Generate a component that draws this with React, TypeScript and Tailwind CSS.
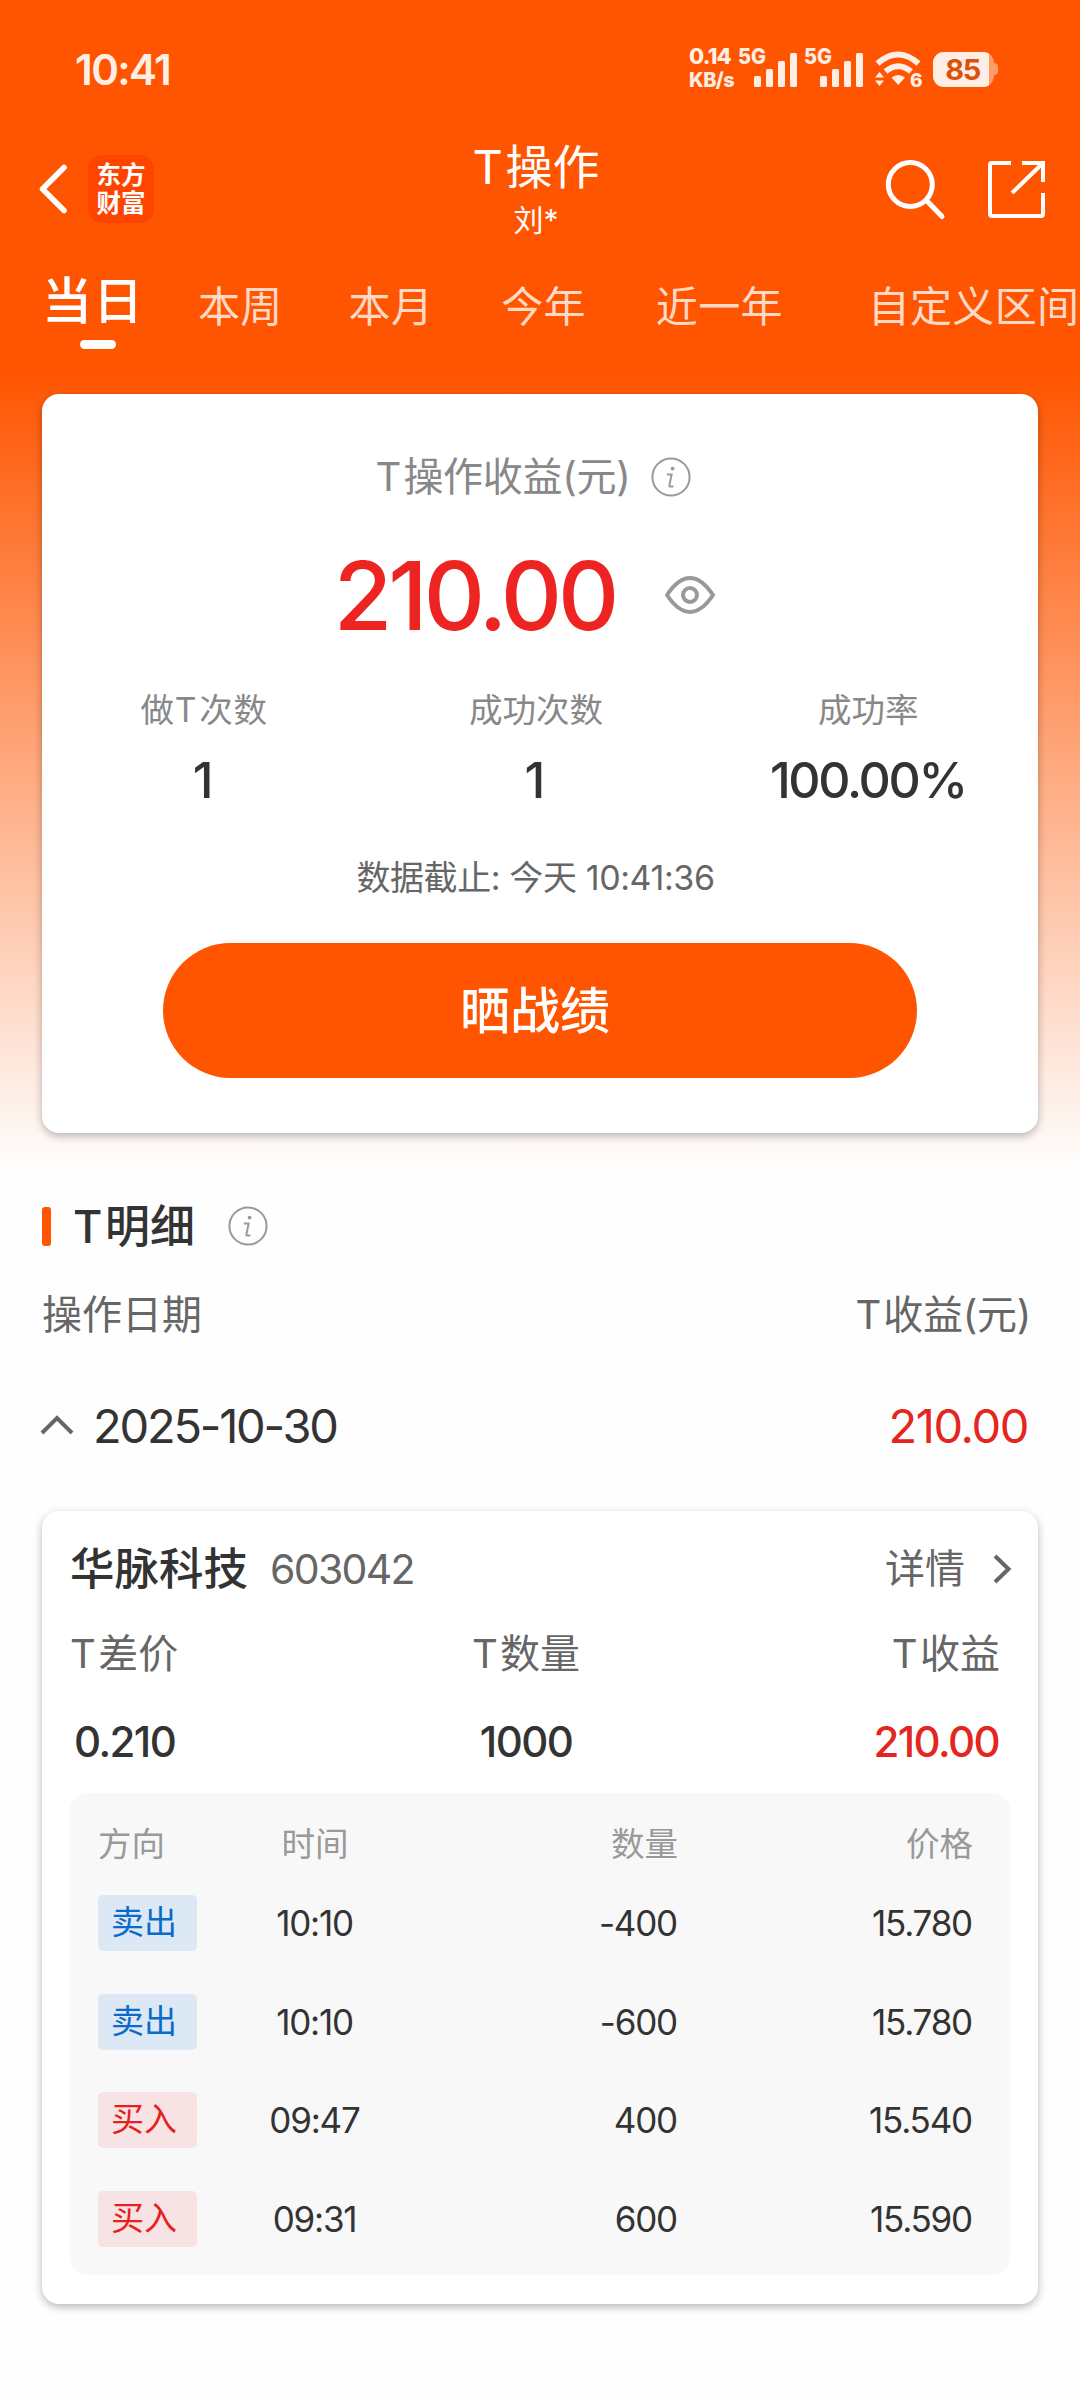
import React from 'react';
import clsx from 'clsx';

interface Trade {
  side: 'buy' | 'sell';
  time: string;
  amount: string;
  price: string;
}

const TABS = [
  { label: '本周', gap: 'ml-[56px]' },
  { label: '本月', gap: 'ml-[66px]' },
  { label: '今年', gap: 'ml-[68px]' },
  { label: '近一年', gap: 'ml-[70px]' },
  { label: '自定义区间', gap: 'ml-[85px]' },
];

const TRADES: Trade[] = [
  { side: 'sell', time: '10:10', amount: '-400', price: '15.780' },
  { side: 'sell', time: '10:10', amount: '-600', price: '15.780' },
  { side: 'buy', time: '09:47', amount: '400', price: '15.540' },
  { side: 'buy', time: '09:31', amount: '600', price: '15.590' },
];

// "T" followed by the thin gap that separates latin from chinese text
const T = () => <span className="mr-[0.06em]">T</span>;

const InfoIcon = () => (
  <svg width="40" height="40" viewBox="0 0 40 40" fill="none" stroke="#999" className="shrink-0">
    <circle cx="20" cy="20" r="18.6" strokeWidth="2" />
    <path d="M15.8 17.6H20.6L18.4 28.2Q18 29.6 19.6 29.6H22.4" strokeWidth="2" />
    <circle cx="21.6" cy="11.6" r="1.9" fill="#999" stroke="none" />
  </svg>
);

const Signal = () => (
  <svg width="60" height="42" viewBox="0 -2 60 42" fill="#ffeee6" className="shrink-0 overflow-visible">
    <text x="-1" y="14" fontSize="22" fontWeight="800" textLength="28" lengthAdjust="spacingAndGlyphs">5G</text>
    <rect x="15" y="26" width="7" height="11" rx="1.5" />
    <rect x="27" y="19" width="7" height="18" rx="1.5" />
    <rect x="39" y="11" width="7" height="26" rx="1.5" />
    <rect x="51" y="3" width="7" height="34" rx="1.5" />
  </svg>
);

const Wifi = () => (
  <svg width="50" height="44" viewBox="0 -2 50 44" fill="#ffeee6" className="shrink-0 overflow-visible">
    <path d="M1.5 14.5Q22 -3.5 42.5 14.5" fill="none" stroke="#ffeee6" strokeWidth="6" />
    <path d="M9.5 22.5Q22.3 12 35 22.5" fill="none" stroke="#ffeee6" strokeWidth="6" />
    <path d="M15.5 28.5Q22.3 23.5 29 28.5L22.3 36Z" />
    <path d="M-1 28.500L3.500 23L8 28.500Z M-1 31.500L8 31.500L3.500 37Z" />
    <text x="34" y="37.5" fontSize="19" fontWeight="800">6</text>
  </svg>
);

const StatusBar = () => (
  <div className="h-[138px] flex items-center pl-[75px] pr-[82px] text-[#ffeee6]">
    <span className="pt-[2px] text-[42px] leading-none font-semibold tracking-[-1.6px]">10:41</span>
    <div className="ml-auto flex items-center">
      <div className="w-[50px] pb-[2px] font-extrabold leading-[24px] whitespace-nowrap">
        <div className="text-[22px] tracking-[-0.8px]">0.14</div>
        <div className="text-[20px] tracking-[-0.6px]">KB/s</div>
      </div>
      <div className="w-[66px]"><Signal /></div>
      <div className="w-[71px]"><Signal /></div>
      <div className="w-[57px]"><Wifi /></div>
      <div className="w-[65px] flex items-center">
        <div className="w-[61px] h-[35px] rounded-[11px] bg-[#ff9a69] overflow-hidden">
          <div className="w-[56px] h-full bg-[#ffeee6] text-[#d9530b] text-[29px] leading-[35px] font-bold text-center pl-[3px] tracking-[-1.5px]">85</div>
        </div>
        <div className="w-[4px] h-[12px] rounded-r-[4px] bg-[#ff9a69]" />
      </div>
    </div>
  </div>
);

const Header = () => (
  <div className="h-[106px] flex text-white">
    <div className="w-[340px] h-[102px] flex items-center pl-[38px]">
      <svg width="32" height="52" viewBox="0 0 32 52" fill="none" stroke="#fff" strokeWidth="5.5" strokeLinecap="round" strokeLinejoin="round">
        <path d="M26 4.500L4.500 26L26 47.500" />
      </svg>
      <div className="ml-[18px] w-[66px] h-[68px] rounded-[14px] bg-[#ff4400] flex flex-col items-center justify-center text-[24.5px] leading-[28px] font-bold">
        <span>东方</span>
        <span>财富</span>
      </div>
    </div>
    <div className="w-[392px] text-center">
      <div className="text-[47px] leading-[58px]"><T />操作</div>
      <div className="text-[30px] leading-[48px]">刘*</div>
    </div>
    <div className="flex-1 h-[104px] flex items-center">
      <svg width="64" height="64" viewBox="0 0 64 64" fill="none" stroke="#fff" strokeWidth="5" strokeLinecap="round" className="ml-[151px]">
        <circle cx="27.3" cy="26.5" r="22" />
        <path d="M44.500 43.500L59 58.500" />
      </svg>
      <svg width="60" height="60" viewBox="0 0 60 60" fill="none" stroke="#fff" strokeWidth="4" strokeLinejoin="round" className="ml-[39px]">
        <path d="M25 3H6Q4 3 4 5V54Q4 56 6 56H55Q57 56 57 54V33" />
        <path d="M36 3H57V22" strokeLinejoin="miter" />
        <path d="M57 3L26 33" />
      </svg>
    </div>
  </div>
);

const TabBar = () => (
  <div className="h-[150px] flex pl-[42px] whitespace-nowrap overflow-hidden">
    <div className="w-[100px] shrink-0">
      <div className="text-[50px] leading-[96px] h-[96px] pt-[9px] text-white font-medium tracking-[1px]">当日</div>
      <div className="ml-[38px] w-[36px] h-[9px] rounded-full bg-white" />
    </div>
    {TABS.map((tab) => (
      <div key={tab.label} className={clsx('shrink-0 text-[42px] leading-[125px] text-[#ffd9c5] tracking-[0.3px]', tab.gap)}>
        {tab.label}
      </div>
    ))}
  </div>
);

const Stat = ({ label, value }: { label: React.ReactNode; value: React.ReactNode }) => (
  <div className="flex-1 text-center">
    <div className="text-[33.5px] leading-[50px] text-[#888]">{label}</div>
    <div className="mt-[15px] text-[50px] leading-[60px] font-medium text-[#333] tracking-[-2px]">{value}</div>
  </div>
);

const SummaryCard = () => (
  <div className="mx-[42px] h-[739px] rounded-[17px] bg-white shadow-[0_3px_8px_rgba(0,0,0,0.28)] flex flex-col items-center">
    <div className="mt-[53px] h-[60px] flex items-center text-[40px] text-[#888] pr-[14px] tracking-[-0.3px]">
      <T />操作收益(元)
      <span className="ml-[20px]"><InfoIcon /></span>
    </div>
    <div className="mt-[38px] h-[100px] flex items-center pr-[30px]">
      <span className="text-[95px] leading-none font-medium text-[#ee2422] tracking-[-4px]">210.00</span>
      <svg width="52" height="42" viewBox="0 0 52 42" fill="none" stroke="#999" strokeWidth="4" className="ml-[49px]">
        <path d="M3 21C9 12 16.5 4 26 4S43 12 49 21C43 30 35.5 38 26 38S9 30 3 21Z" strokeLinejoin="round" />
        <circle cx="26" cy="21" r="7" />
      </svg>
    </div>
    <div className="mt-[40px] w-full flex pr-[8px]">
      <Stat label={<span className="mr-[5px] tracking-[0.8px]">做<T />次数</span>} value={<span className="mr-[9px]">1</span>} />
      <Stat label="成功次数" value={<span className="mr-[4px]">1</span>} />
      <Stat label={<span className="ml-[6px]">成功率</span>} value={<span className="ml-[5px] tracking-[-2.3px]">100.00%</span>} />
    </div>
    <div className="mt-[38px] pr-[9px] text-[34px] leading-[60px] text-[#666] tracking-[-0.4px]">数据截止: 今天 10:41:36</div>
    <button className="mt-[35px] w-[754px] h-[135px] shrink-0 rounded-full bg-[#ff5500] text-white text-[50px] leading-none font-medium pr-[10px]">
      晒战绩
    </button>
  </div>
);

const StockCard = () => (
  <div className="mx-[42px] h-[793px] rounded-[17px] bg-white shadow-[0_3px_8px_rgba(0,0,0,0.28)] px-[28px] pt-[28px]">
    <div className="h-[60px] flex items-center">
      <span className="text-[44.5px] leading-none font-medium text-[#333]">华脉科技</span>
      <span className="ml-[22px] text-[41px] leading-none text-[#666] tracking-[-1.7px]">603042</span>
      <span className="ml-auto text-[40px] leading-none text-[#666]">详情</span>
      <svg width="22" height="32" viewBox="0 0 22 32" fill="none" stroke="#666" strokeWidth="4" className="ml-[26px] -mr-[3px]">
        <path d="M4 3L17.500 16L4 29" />
      </svg>
    </div>
    <div className="mt-[25px] grid grid-cols-[300px_312px_1fr] pr-[10px] text-[40px] leading-[60px] text-[#666]">
      <span><T />差价</span>
      <span className="text-center"><T />数量</span>
      <span className="text-right"><T />收益</span>
    </div>
    <div className="mt-[28px] grid grid-cols-[300px_312px_1fr] pr-[11px] text-[42px] leading-[60px] font-medium text-[#333] tracking-[-1.6px]">
      <span className="pl-[4px]">0.210</span>
      <span className="text-center">1000</span>
      <span className="text-right text-[#e52620]">210.00</span>
    </div>
    <div className="mt-[21px] h-[482px] rounded-[18px] bg-[#f8f8f8] px-[28px] pt-[21px]">
      <div className="h-[60px] flex items-center text-[33.5px] text-[#999]">
        <span className="w-[143px]">方向</span>
        <span className="w-[148px] text-center">时间</span>
        <span className="w-[289px] text-right">数量</span>
        <span className="flex-1 text-right pr-[9px]">价格</span>
      </div>
      {TRADES.map((trade, i) => (
        <div key={i} className="h-[98.6px] flex items-center text-[35px] text-[#333] tracking-[-1.2px]">
          <div className="w-[143px]">
            <div
              className={clsx(
                'w-[99px] h-[56px] rounded-[5px] pl-[13px] text-[33px] leading-[54px] tracking-normal',
                trade.side === 'sell' ? 'bg-[#dde8f5] text-[#0a6cc8]' : 'bg-[#f8e3e4] text-[#e62020]'
              )}
            >
              {trade.side === 'sell' ? '卖出' : '买入'}
            </div>
          </div>
          <span className="w-[148px] pr-[1px] text-center">{trade.time}</span>
          <span className="w-[288px] text-right">{trade.amount}</span>
          <span className="flex-1 text-right pr-[10px]">{trade.price}</span>
        </div>
      ))}
    </div>
  </div>
);

const App: React.FC = () => {
  return (
    <div className="w-[1080px] h-[2400px] overflow-hidden bg-[#fefefe] font-['Inter','Noto_Sans_CJK_SC',sans-serif]">
      <div className="bg-[linear-gradient(180deg,#ff5500_370px,#fefefe_1170px)]">
        <StatusBar />
        <Header />
        <TabBar />
        <SummaryCard />

        {/* T detail list */}
        <div className="mt-[63px] h-[60px] flex items-center pl-[42px]">
          <div className="w-[9px] h-[39px] rounded-[3px] bg-[#ff5500]" />
          <span className="ml-[22px] text-[45px] leading-none font-medium text-[#333]"><T />明细</span>
          <span className="ml-[33px]"><InfoIcon /></span>
        </div>
        <div className="mt-[29px] flex justify-between pl-[42px] pr-[49px] text-[40px] leading-[60px] text-[#666]">
          <span>操作日期</span>
          <span className="tracking-[-0.3px]"><T />收益(元)</span>
        </div>
        <div className="mt-[51px] h-[60px] flex items-center pl-[39px] pr-[52px] text-[47px]">
          <svg width="36" height="24" viewBox="0 0 36 24" fill="none" stroke="#666" strokeWidth="4" className="mb-[2px]">
            <path d="M3 20L18 5L33 20" />
          </svg>
          <span className="ml-[18px] text-[#333] tracking-[-2.2px]">2025-10-30</span>
          <span className="ml-auto text-[#e52620] tracking-[-1.4px]">210.00</span>
        </div>
        <div className="h-[55px]" />
        <StockCard />
      </div>
    </div>
  );
};

export default App;
